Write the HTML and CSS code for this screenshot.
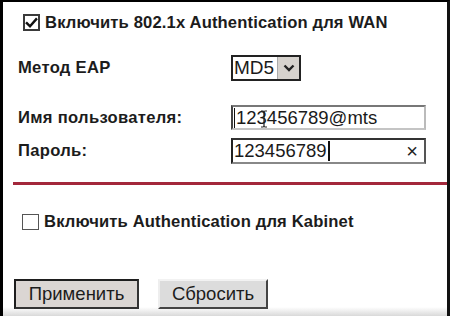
FILE: index.html
```html
<!DOCTYPE html>
<html lang="ru">
<head>
<meta charset="utf-8">
<title>802.1x</title>
<link rel="stylesheet" href="styles.css">
</head>
<body>
<div class="frame">
  <div class="check-row first">
    <span class="box checked">
      <svg viewBox="0 0 14 14" width="14" height="14"><path d="M2 7.2 L5.4 10.6 L12 3" fill="none" stroke="#111" stroke-width="2.6" stroke-linecap="square"/></svg>
    </span>
    <span class="check-label">Включить 802.1x Authentication для WAN</span>
  </div>

  <div class="field eap">
    <span class="label">Метод EAP</span>
    <div class="select">
      <span class="select-value">MD5</span>
      <span class="select-btn">
        <svg viewBox="0 0 12 8" width="12" height="8"><path d="M1.5 1.5 L6 6 L10.5 1.5" fill="none" stroke="#222" stroke-width="2.4"/></svg>
      </span>
    </div>
  </div>

  <div class="field user">
    <span class="label">Имя пользователя:</span>
    <div class="input light">
      <span class="caret thin"></span>
      <span class="value">123456789@mts</span>
      <svg class="ibeam" viewBox="0 0 8 18" width="8" height="18"><path d="M1 1 H3 Q4 1 4 2.5 V15.5 Q4 17 3 17 H1 M7 1 H5 Q4 1 4 2.5 M4 15.5 Q4 17 5 17 H7" fill="none" stroke="#222" stroke-width="1.2"/></svg>
    </div>
  </div>

  <div class="field pass">
    <span class="label">Пароль:</span>
    <div class="input dark">
      <span class="value">123456789</span><span class="caret"></span>
      <span class="clear">×</span>
    </div>
  </div>

  <div class="divider"></div>

  <div class="check-row second">
    <span class="box"></span>
    <span class="check-label">Включить Authentication для Kabinet</span>
  </div>

  <div class="buttons">
    <button class="btn apply">Применить</button>
    <button class="btn reset">Сбросить</button>
  </div>
</div>
</body>
</html>
```

FILE: styles.css
```css
html, body {
  margin: 0;
  padding: 0;
  background: #000;
}

.frame {
  box-sizing: border-box;
  width: 450px;
  height: 316px;
  border-top: 2px solid #000;
  border-left: 3px solid #000;
  border-right: 3px solid #111;
  background: linear-gradient(to bottom, #fff calc(100% - 9px), #d9d9d9);
  padding-left: 10px;
  font-family: "Liberation Sans", Arial, sans-serif;
  color: #1c1c1c;
  overflow: hidden;
}

.check-row {
  display: flex;
  align-items: center;
  gap: 5px;
}

.check-row.first {
  margin-top: 11px;
  height: 19px;
  padding-left: 10px;
}

.check-row.second {
  margin-top: 28px;
  height: 18px;
  padding-left: 9px;
}

.box {
  box-sizing: border-box;
  width: 17px;
  height: 17px;
  border: 2px solid #3a3a3a;
  background: #fff;
  display: flex;
  align-items: center;
  justify-content: center;
}

.check-row.second .box {
  width: 17px;
  height: 16px;
  border: 1.5px solid #555;
}

.check-label {
  font-weight: bold;
  font-size: 16.6px;
  letter-spacing: 0.15px;
  white-space: nowrap;
}

.field {
  display: flex;
  align-items: center;
}

.label {
  width: 213px;
  padding-left: 5px;
  font-weight: bold;
  font-size: 16.6px;
  letter-spacing: 0.3px;
  white-space: nowrap;
}

.field.eap {
  margin-top: 23px;
  height: 26px;
}

.field.user {
  margin-top: 24px;
  height: 25px;
}

.field.pass {
  margin-top: 8px;
  height: 26px;
}

.select {
  box-sizing: border-box;
  width: 70px;
  height: 26px;
  border: 2px solid #222;
  display: flex;
  background: #fff;
}

.select-value {
  flex: 1;
  font-size: 19px;
  line-height: 22px;
  padding-left: 1px;
  color: #1a1a1a;
}

.select-btn {
  width: 21px;
  background: #d6d2cd;
  border-left: 1px solid #aaa;
  display: flex;
  align-items: center;
  justify-content: center;
}

.input {
  position: relative;
  box-sizing: border-box;
  width: 195px;
  height: 100%;
  border: 2px solid;
  display: flex;
  align-items: center;
  background: #fff;
  font-size: 18.5px;
  color: #1a1a1a;
  padding-left: 1px;
}

.input.light {
  border-color: #777 #bbb #c4c4c4 #444;
}

.input.dark {
  border-color: #333 #555 #888 #222;
}

.caret {
  display: inline-block;
  width: 2px;
  height: 20px;
  background: #111;
  margin-left: 1px;
}

.caret.thin {
  width: 1px;
  margin-left: 0;
  margin-right: 1px;
}

.ibeam {
  position: absolute;
  left: 27px;
  top: 3px;
}

.clear {
  position: absolute;
  right: 6px;
  top: 0;
  line-height: 22px;
  font-size: 20px;
  color: #222;
}

.divider {
  margin-top: 18px;
  height: 3px;
  background: #a3283b;
  margin-right: -3px;
}

.buttons {
  display: flex;
  gap: 19px;
  margin-top: 48px;
  padding-left: 1px;
}

.btn {
  box-sizing: border-box;
  height: 30px;
  font-family: "Liberation Sans", Arial, sans-serif;
  font-size: 18.5px;
  color: #1c1c1c;
  padding: 0;
  background: #dbd6d3;
}

.btn.apply {
  width: 125px;
  border: 2px solid;
  border-color: #1e1e1e #333 #333 #1e1e1e;
}

.btn.reset {
  width: 110px;
  border: 2px solid;
  border-color: #f2f2f2 #444 #444 #eee;
  background: #dcdcdc;
}
```
